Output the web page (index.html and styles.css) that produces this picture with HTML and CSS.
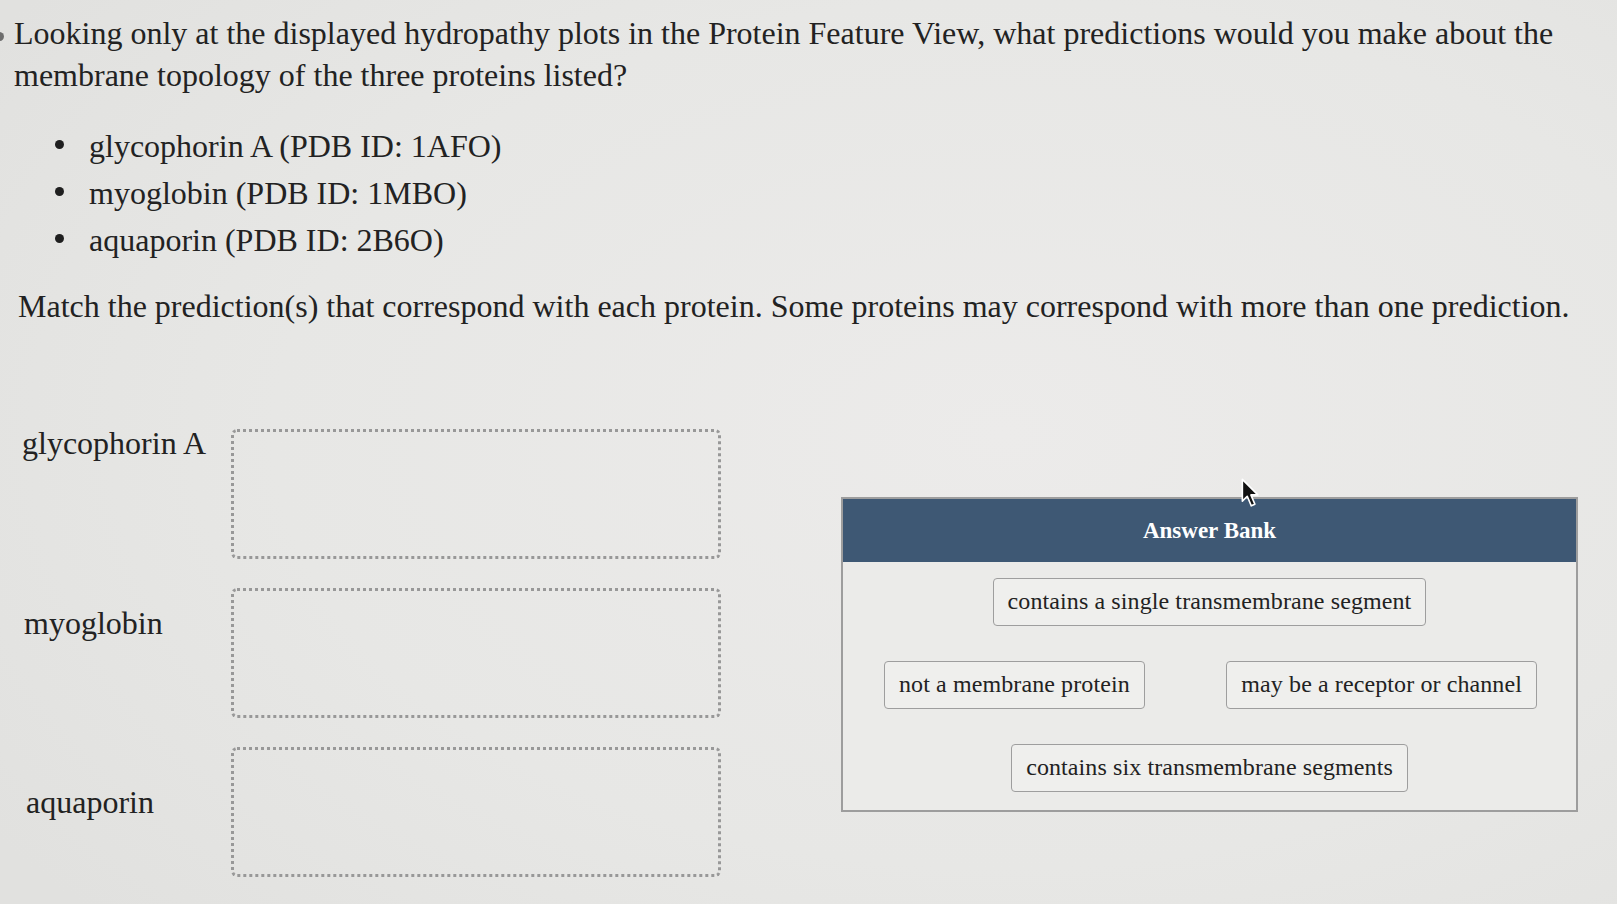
FILE: index.html
```html
<!DOCTYPE html>
<html lang="en">
<head>
<meta charset="utf-8">
<title>Protein Feature View – matching</title>
<link rel="stylesheet" href="styles.css">
</head>
<body>
<main class="page">
  <span class="edge-dot"></span>
  <p class="prompt">Looking only at the displayed hydropathy plots in the Protein Feature View, what predictions would you make about the<br>membrane topology of the three proteins listed?</p>
  <ul class="proteins">
    <li>glycophorin A (PDB ID: 1AFO)</li>
    <li>myoglobin (PDB ID: 1MBO)</li>
    <li>aquaporin (PDB ID: 2B6O)</li>
  </ul>
  <p class="instructions">Match the prediction(s) that correspond with each protein. Some proteins may correspond with more than one prediction.</p>

  <section class="match-area">
    <div class="targets">
      <div class="target-row">
        <div class="target-label">glycophorin A</div>
        <div class="drop-zone"></div>
      </div>
      <div class="target-row">
        <div class="target-label">myoglobin</div>
        <div class="drop-zone"></div>
      </div>
      <div class="target-row">
        <div class="target-label">aquaporin</div>
        <div class="drop-zone"></div>
      </div>
    </div>

    <div class="bank">
      <div class="bank-header">Answer Bank</div>
      <div class="bank-body">
        <div class="bank-row bank-row-center">
          <span class="chip">contains a single transmembrane segment</span>
        </div>
        <div class="bank-row bank-row-spread">
          <span class="chip">not a membrane protein</span>
          <span class="chip">may be a receptor or channel</span>
        </div>
        <div class="bank-row bank-row-center">
          <span class="chip">contains six transmembrane segments</span>
        </div>
      </div>
    </div>
  </section>

  <svg class="cursor" width="19" height="30" viewBox="0 0 14 22" preserveAspectRatio="none" aria-hidden="true">
    <path d="M1 1 L1 17 L4.6 13.4 L7.6 20.4 L10.2 19.2 L7.3 12.4 L12.4 12.4 Z" fill="#111" stroke="#fff" stroke-width="1.2" stroke-linejoin="round"/>
  </svg>
</main>
</body>
</html>
```

FILE: styles.css
```css
html, body {
  margin: 0;
  padding: 0;
}

body {
  width: 1617px;
  height: 904px;
  overflow: hidden;
  background: radial-gradient(ellipse 75% 80% at 62% 48%, #ecebea 0%, #e7e7e5 60%, #e1e1df 100%);
  color: #222222;
  font-family: "Liberation Serif", "Times New Roman", serif;
}

.page {
  position: relative;
  padding: 12px 0 0 14px;
  font-size: 32px;
}

.edge-dot {
  position: absolute;
  left: -5px;
  top: 32px;
  width: 9px;
  height: 9px;
  border-radius: 50%;
  background: #6d6d6d;
}

.prompt {
  margin: 0;
  line-height: 42px;
  white-space: nowrap;
}

.proteins {
  list-style: none;
  margin: 27px 0 0 41px;
  padding: 0;
}

.proteins li {
  line-height: 47px;
}

.proteins li::before {
  content: "";
  display: inline-block;
  width: 9px;
  height: 9px;
  border-radius: 50%;
  background: #1f1f1f;
  margin-right: 25px;
  vertical-align: 8px;
}

.instructions {
  margin: 21px 0 0 4px;
  line-height: 42px;
  white-space: nowrap;
}

.match-area {
  display: flex;
  align-items: flex-start;
  margin-top: 102px;
  padding-left: 8px;
}

.targets {
  display: flex;
  flex-direction: column;
  gap: 29px;
}

.target-row {
  display: grid;
  grid-template-columns: 209px 490px;
  align-items: start;
}

.target-label {
  line-height: 42px;
}

.target-row:nth-child(1) .target-label { margin-top: -7px; }
.target-row:nth-child(2) .target-label { margin-top: 14px; padding-left: 2px; }
.target-row:nth-child(3) .target-label { margin-top: 34px; padding-left: 4px; }

.drop-zone {
  height: 130px;
  box-sizing: border-box;
  border: 3px dotted #989898;
  border-radius: 6px;
}

.bank {
  margin: 68px 0 0 120px;
  width: 737px;
  box-sizing: border-box;
  border: 2px solid #9d9d9d;
  background: #ebebe9;
}

.bank-header {
  height: 63px;
  display: flex;
  align-items: center;
  justify-content: center;
  background: #3e5874;
  color: #ffffff;
  font-weight: bold;
  font-size: 23px;
}

.bank-body {
  display: flex;
  flex-direction: column;
  gap: 35px;
  padding: 16px 0 18px;
}

.bank-row {
  display: flex;
}

.bank-row-center {
  justify-content: center;
}

.bank-row-spread {
  justify-content: space-between;
  padding: 0 39px 0 41px;
}

.chip {
  display: inline-flex;
  align-items: center;
  height: 48px;
  box-sizing: border-box;
  padding: 0 14px 2px;
  border: 1.5px solid #9e9e9e;
  border-radius: 4px;
  background: #efefed;
  font-size: 24px;
  letter-spacing: 0.1px;
  color: #222222;
  white-space: nowrap;
}

.cursor {
  position: absolute;
  left: 1241px;
  top: 478px;
}
```
